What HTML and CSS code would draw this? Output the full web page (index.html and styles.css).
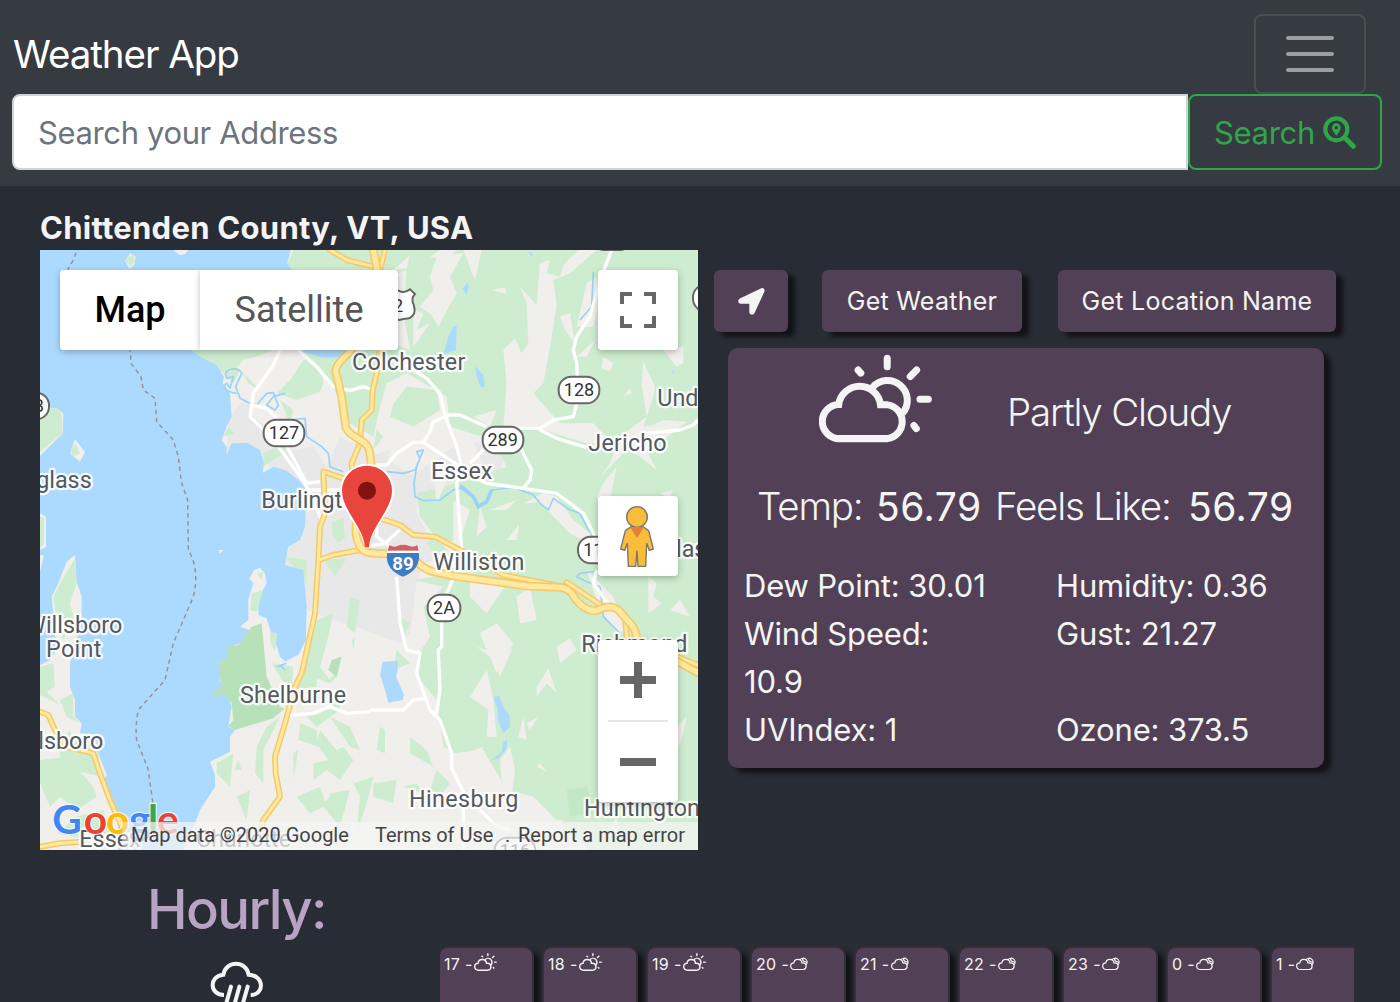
FILE: index.html
```html
<!DOCTYPE html>
<html lang="en">
<head>
<meta charset="utf-8">
<title>Weather App</title>
<link rel="stylesheet" href="styles.css">
</head>
<body>
<svg class="defs" aria-hidden="true">
  <symbol id="cloud" viewBox="357 313 338 264">
    <g fill="none" stroke="currentColor" stroke-width="21">
      <path d="M420 565H562A51 51 0 0 0 562 464H541A63 63 0 0 0 416 463A51 51 0 0 0 420 565Z"/>
      <path d="M517 412A55 55 0 1 1 607 489"/>
      <path stroke-linecap="round" d="M561 325V350M474 360L482 369M630 379L649 360M659 447H684M641 526L648 535"/>
    </g>
  </symbol>
  <symbol id="night" viewBox="357 378 278 204">
    <g fill="none" stroke="currentColor" stroke-width="19">
      <path d="M420 565H562A51 51 0 0 0 562 464H541A63 63 0 0 0 416 463A51 51 0 0 0 420 565Z"/>
      <path d="M514 413A57 57 0 1 1 607 489M550 394Q548 445 616 450"/>
    </g>
  </symbol>
</svg>
<header class="navbar">
  <div class="nav-top">
    <a class="brand">Weather App</a>
    <button class="toggler"><i></i><i></i><i></i></button>
  </div>
  <form class="search">
    <input class="address" type="text" placeholder="Search your Address">
    <button class="search-btn" type="button"><span>Search</span>
      <svg width="33" height="33" viewBox="0 0 99 99"><g fill="none" stroke="currentColor"><circle cx="40" cy="40" r="33" stroke-width="12.500"/><path d="M67 67L91 91" stroke-width="15" stroke-linecap="round"/></g><path fill="currentColor" fill-rule="evenodd" d="M40 59C33 49 27 43 27 35A13 13 0 0 1 53 35C53 43 47 49 40 59ZM40 30A5 5 0 1 0 40 40A5 5 0 1 0 40 30Z"/></svg>
    </button>
  </form>
</header>
<main class="main">
  <section class="place">
    <h1 class="place-name">Chittenden County, VT, USA</h1>
    <div class="map">
      <svg class="terrain" viewBox="0 0 1974 1800">
        <defs>
          <path id="minor" d="M870 0L920 30L1000 50M1035 0L1020 60V300L1008 380L998 420L995 480L965 510L960 580L935 640L945 760M910 685L850 665L855 790L840 830L835 930L825 1090L785 1270L765 1310L735 1420L705 1520L707 1570L720 1640L670 1710L650 1800M835 930L880 915L960 900M1020 805L1080 825L1120 855L1185 860L1260 900L1390 975L1570 1010M1580 997L1690 1070M1755 1100L1760 1160M0 1385L25 1395L45 1440L80 1490L160 1510L180 1570L210 1650L250 1740M0 1790L60 1780L130 1775M1900 1215L1974 1245"/>
          <path id="highway" d="M1000 0L1012 60L1000 180L930 305Q885 345 887 365L905 440L917 530Q920 545 945 560L975 580Q990 590 993 640L950 750L948 850Q955 900 985 908L1040 912L1130 935Q1155 960 1180 965L1240 978L1460 1008L1560 1012Q1590 1015 1605 1045Q1635 1085 1670 1082Q1715 1058 1740 1085L1775 1125Q1790 1145 1792 1175L1850 1200L1974 1268"/>
        </defs>
        <rect width="1974" height="1800" fill="#f0efeb"/>
        <path fill="#e8e8e8" d="M570 500L620 440L640 500L760 600L820 590L860 650L900 560L990 600L1130 680L1130 790L1180 880L1250 910L1150 940L1130 1000L1110 1150L1080 1180L950 1130L880 1110L800 1080L735 940L800 720L670 640L560 600ZM1130 670L1240 590L1290 570L1395 610L1370 700L1300 760L1130 740ZM990 620L1050 600L1040 660ZM1790 545L1830 520L1880 535L1850 560L1795 565Z"/>
        <path fill="#ceedd0" d="M742 40L760 0H1974V1800H1650L1580 1740L1480 1640L1400 1620L1330 1500L1240 1510L1210 1490L1190 1350L1140 1290L1130 1220L1170 1160L1150 1070L1210 1010L1120 990L1300 960L1250 870L1200 880L1140 800L1130 730L1250 700L1400 650L1360 570L1230 530L1220 440L1100 370L1040 400L1020 470L1000 560L930 520L880 410L770 300L870 320L760 70Z"/>
        <path fill="#f0efeb" d="M1000 300L1060 280L1110 300L1090 190L1100 60L1000 100ZM1060 60L1110 15L1100 55ZM1170 80L1190 20L1270 10L1230 80L1250 130L1230 165L1195 230L1175 195L1140 170L1180 120ZM1170 20L1200 0H1250L1220 30ZM1270 0H1325L1305 90ZM1355 120L1395 112L1400 132ZM1440 110L1490 165L1500 40L1530 30L1520 70L1560 80L1570 45L1615 0H1670L1590 70L1540 90L1550 165L1530 290L1510 400L1480 430L1560 520L1660 520L1720 580L1640 580L1510 540L1390 530L1400 400L1390 300L1425 265L1445 310L1465 280L1460 160ZM1560 200L1590 190L1605 280L1575 240ZM1640 100L1700 60L1660 230L1610 230ZM1610 320L1665 270L1640 320ZM1690 320L1720 340L1710 365L1685 355ZM1810 335L1845 410L1840 440L1810 530L1840 525L1870 510L1940 515L1890 555L1820 600L1850 660L1800 620L1760 600L1680 680L1710 640L1740 560L1820 500L1805 400ZM1870 300L1930 290V340L1910 350ZM1750 440L1770 415L1775 430ZM1780 420L1760 445ZM1690 700L1730 650L1700 800L1670 740ZM1300 500L1370 480L1350 530ZM1120 180L1150 190L1130 240L1170 220L1120 290ZM1210 550L1300 570L1330 650L1280 650ZM1180 660L1240 650L1190 760ZM1350 780L1430 750L1400 780ZM1240 750L1290 780L1260 870L1240 910ZM1400 870L1440 820L1430 870ZM1450 760L1510 730L1550 740L1600 810L1650 850L1640 880L1590 850L1500 760ZM1860 730L1900 720L1890 740L1930 770ZM1320 770L1340 830L1310 860ZM1640 960L1720 1040L1760 1140L1730 1150L1680 1080ZM1825 980L1850 1000L1840 1040L1865 1060L1825 1090ZM1290 970L1400 1000L1340 1090L1290 1040ZM1430 1040L1470 1010L1490 1110L1440 1120ZM1310 1190L1340 1200L1320 1150L1370 1120L1420 1180L1370 1270L1350 1220ZM1550 1190L1590 1165L1610 1200L1560 1240ZM1490 1310L1525 1255L1550 1330L1520 1300L1490 1340ZM1370 1250L1420 1190L1380 1280ZM1290 1340L1340 1260L1360 1350L1370 1460L1340 1460L1345 1380ZM1435 1460L1450 1400L1460 1470ZM1460 1420L1495 1400L1470 1440ZM1380 1530L1410 1490L1425 1560L1415 1640L1385 1600ZM1250 1520L1330 1490L1290 1640L1240 1600ZM1500 1540L1520 1565L1490 1550ZM1890 1080L1920 1050L1950 1100ZM1910 1430L1940 1400L1930 1450L1910 1510ZM1700 1740L1730 1705L1740 1750ZM1490 1710L1570 1710L1540 1770Z"/>
        <path fill="#ceedd0" d="M1040 170L1060 140V220ZM610 330L590 350L660 420L625 400L600 360L580 400L540 360L480 325L440 300H700L650 320ZM750 390L790 330L840 320L850 400L840 425L770 450L710 430ZM720 450L760 480L750 520ZM670 610L750 575L730 610L670 650ZM550 560L565 530L585 550ZM875 815L910 805L915 865L895 880L878 855ZM735 920L800 930V1000L760 950ZM850 930L920 925L885 980ZM930 1040L960 1050L945 1150L920 1130ZM935 1170L945 1165L940 1200ZM830 1110L880 1090L860 1180L840 1250L870 1290L900 1235L890 1280L870 1300L820 1280L740 1240L790 1240ZM680 1140L715 1150L705 1210L690 1180ZM690 1230L750 1260L830 1250L830 1310L760 1320L720 1290ZM800 1400L840 1390L900 1340L900 1380L830 1430ZM870 1400L930 1430L960 1500L930 1490ZM780 1420L830 1440L835 1490L775 1470ZM720 1400L680 1430L650 1490L645 1570L670 1600L670 1500ZM760 1510L775 1500L760 1590ZM840 1440L890 1500L910 1490L940 1530L900 1590L860 1560L820 1590L820 1540L865 1530L830 1480ZM530 1540L580 1510L570 1610L530 1570ZM595 1530L605 1560H585ZM590 1640L630 1620L620 1710ZM770 1640L840 1610L860 1670L870 1630L930 1620L900 1730L850 1670L810 1690ZM940 1600L1000 1580L980 1660L950 1750L960 1640ZM1070 1200L1110 1240L1060 1260ZM1080 1100L1110 1120L1090 1160ZM1020 1430L1035 1440V1510L1010 1500ZM1110 1460L1160 1500L1180 1550L1110 1510ZM1000 1600L1070 1590L1060 1660L1000 1640ZM1190 1560L1230 1600L1200 1640L1170 1620ZM1090 1610L1130 1600L1150 1630ZM1070 930L1100 940L1080 970ZM1160 880L1190 850L1220 900L1180 910ZM1060 460L1100 410L1190 420L1200 480L1120 530L1050 500ZM1010 540L1030 560L1000 600ZM1420 800L1500 750L1450 850ZM850 1660L880 1630L890 1700Z"/>
        <path fill="#acdaff" d="M0 0H752L742 40L760 65L900 220L935 305Q900 330 840 320L775 300H450L490 325L530 345L552 380L548 400L570 430L575 500L560 530L545 570L560 590L560 615L575 580L620 578L660 600L672 640L668 668L700 650L740 662L775 690L800 720L795 830L780 870L745 890L735 945L790 960L800 1070L798 1170L775 1215L735 1235L720 1220L700 1155L635 1130L600 1180L565 1195V1225L535 1235L545 1280L540 1290L560 1330L575 1370L565 1430L585 1440L570 1460V1505L510 1535L525 1575V1610L480 1680L465 1720L430 1800H0Z"/>
        <path fill="#f0efeb" d="M0 1245L30 1230L50 1200L35 1040L55 1000L80 935L105 915L110 995L125 1040V1110L90 1240L90 1310L105 1350V1400L125 1420L120 1450L165 1455L175 1510L200 1575L185 1600L205 1660L235 1710V1800H0ZM0 470L50 475L70 490L68 550L0 618ZM0 790L18 800V890L0 900V965L12 915H0ZM105 568L135 605L120 635L90 610ZM270 10L287 20L283 45L268 57L255 32ZM400 0H445L435 12L420 16ZM535 900H550L540 912ZM625 1110V1048L640 1000L628 985L643 960L660 953L674 968L680 1000L655 1045V1095L680 1105L700 1170L725 1240L775 1215L800 1200L760 1330L720 1390L690 1340L660 1150L600 1130Z"/>
        <path fill="#ceedd0" d="M0 475H50L66 490V550L0 605ZM0 800H12V880L0 895ZM105 580L120 610L100 620L92 605ZM262 20L280 16L285 35L270 50L258 35ZM105 925L110 1000L90 1060L100 1100L70 1170L50 1110L40 1040L60 1000ZM650 970L670 965L665 990ZM635 1030L670 1020L650 1085L630 1080ZM0 1250L40 1240L45 1310L20 1325L60 1365L0 1335ZM60 1350L100 1330V1400L120 1420L80 1400ZM60 1470L90 1440L100 1480L150 1450L170 1480L185 1580L140 1570L60 1550ZM0 1530L80 1520L160 1610L170 1640L110 1680L60 1640L30 1670L0 1600ZM50 1750L110 1700L190 1680L215 1760L150 1770ZM690 1145L712 1150L705 1205L692 1180ZM695 1240L760 1250L755 1310L725 1290Z"/>
        <path fill="#b7e2b9" d="M635 1130L665 1120L680 1280L720 1370L735 1375L700 1405L585 1440L565 1428L580 1410L575 1360L550 1330L530 1340L518 1325L545 1310L535 1235L562 1225L565 1190L595 1185ZM875 1230L905 1220L890 1280L865 1260Z"/>
        <path fill="#c3e8c5" d="M1580 1620L1640 1610L1670 1690L1590 1700Z"/>
        <path fill="#acdaff" d="M1225 260L1240 228H1250L1248 300L1210 312ZM1268 115L1282 98L1288 110L1278 135ZM1305 348L1330 375L1334 410L1322 412L1310 380ZM1028 1235L1074 1233L1073 1260L1068 1280L1092 1335L1088 1350L1045 1358L1032 1310L1020 1275ZM1360 1340L1378 1338L1390 1370L1408 1395L1410 1430L1390 1450L1375 1415L1372 1375ZM1390 1475L1402 1470L1398 1500L1375 1525L1352 1532L1385 1505ZM1463 5L1478 10V20ZM1893 357L1905 365L1900 372Z"/>
        <path fill="none" stroke="#9bd2f8" stroke-width="5" stroke-linejoin="round" d="M590 430C555 425 545 410 560 400L570 415L580 380L560 385C545 350 600 350 605 370L587 410L600 445L620 455L650 465L680 430L700 428L715 465L705 480L680 465L700 440L735 430M750 510L795 505L800 560L845 590L865 610L870 650L910 665M1040 665L1090 670L1125 660L1140 625L1130 605L1150 600L1130 650L1122 700L1125 740L1150 752L1200 750L1240 720L1270 710L1300 740L1315 770L1340 755L1355 720L1420 712L1480 735L1500 760L1525 780L1540 745L1590 780L1620 790L1645 840L1680 880M1690 960L1620 970L1610 980L1640 995L1680 1010L1690 1100L1740 1150M710 1250L740 1240M720 1245L735 1260M1660 65L1655 170L1620 210"/>
        <path fill="none" stroke="#9bd2f8" stroke-width="11" d="M1260 708L1300 740L1315 770L1340 755L1355 720"/>
        <path fill="none" stroke="#fff" stroke-width="10" stroke-linejoin="round" d="M720 300L700 345L640 430L635 465L680 475L715 510M635 465L630 500L690 560L730 610L795 700L850 820M742 590L800 700L840 695M775 300L830 350L880 410L930 422L970 410L1000 420M1095 345L1160 385L1200 430L1215 495L1250 590L1265 650L1250 700L1265 900M1240 985L1220 1030M1205 1110V1190L1195 1200L1200 1320L1190 1390M1215 495H1260L1340 530M1215 500L1180 515L1170 545L1150 577H1120L1070 610L1040 645H1000M1150 577L1260 650M1290 640L1330 600M1440 590L1475 660L1470 690L1450 715L1340 700L1280 670M1450 715L1550 730L1630 790L1670 870M1670 960L1660 1000L1710 1070M1430 535L1500 535L1540 510L1600 500L1615 440L1610 340L1600 300L1610 260L1650 200L1680 90L1715 0M1500 540L1550 565L1640 592M1820 550L1920 540L1960 525L1974 510M1070 980L1080 1120L1100 1200L1140 1210L1130 1270L1170 1380L1200 1410L1235 1510V1555L1270 1625V1800M990 1380H1090L1120 1350L1155 1345M1320 1680L1370 1730L1410 1740M750 1395L820 1390L870 1370L920 1390L990 1385M1010 830V860L1035 880L1080 840M800 720L910 720M960 892L1040 880L1070 920"/>
        <g fill="none" stroke-linejoin="round" stroke-linecap="round">
          <use href="#minor" stroke="#f4ca67" stroke-width="18"/>
          <use href="#minor" stroke="#ffe8a0" stroke-width="9"/>
          <use href="#highway" stroke="#f4ca67" stroke-width="26"/>
          <use href="#highway" stroke="#ffe8a0" stroke-width="16"/>
        </g>
        <path fill="none" stroke="#959595" stroke-width="4.500" stroke-dasharray="13 11" d="M108 8L100 30L85 55L70 120L270 290L273 340L303 380L310 420L345 445L350 515L400 570L415 620L425 700L443 750L445 900Q480 960 460 1040L400 1180L375 1290L295 1380Q285 1430 290 1470L325 1560L340 1670"/>
        <g class="labels" font-size="70">
          <text x="936" y="359" textLength="340">Colchester</text><text x="1173" y="686" textLength="184">Essex</text><text x="664" y="775" textLength="322">Burlington</text><text x="1645" y="604" textLength="235">Jericho</text><text x="1852" y="469">Underhill</text><text x="155" y="715" text-anchor="end">Douglass</text><text x="247" y="1150" text-anchor="end">Willsboro</text><text x="18" y="1222" textLength="166">Point</text><text x="190" y="1498" text-anchor="end">Willsboro</text><text x="600" y="1360" textLength="318">Shelburne</text><text x="1107" y="1672" textLength="328">Hinesburg</text><text x="1632" y="1697" textLength="348">Huntington</text><text x="1180" y="961" textLength="273">Williston</text><text x="1624" y="1206" textLength="318">Richmond</text><text x="1908" y="921">las</text><text x="118" y="1790">Essex</text><text x="468" y="1792" textLength="285">Charlotte</text>
        </g>
        <g class="shields">
          <rect x="671" y="509" width="122" height="80" rx="38"/><text x="732" y="568">127</text>
          <rect x="1556" y="380" width="122" height="80" rx="38"/><text x="1617" y="439">128</text>
          <rect x="1328" y="530" width="122" height="80" rx="38"/><text x="1388" y="589">289</text>
          <rect x="1163" y="1034" width="98" height="80" rx="38"/><text x="1212" y="1093">2A</text>
          <rect x="1614" y="860" width="122" height="80" rx="38"/><text x="1675" y="919">117</text>
          <rect x="-95" y="428" width="122" height="80" rx="38"/><text x="-34" y="487">228</text>
          <rect x="1364" y="1763" width="122" height="80" rx="38"/><text x="1425" y="1822">116</text>
          <rect x="1959" y="104" width="122" height="80" rx="38"/>
          <rect x="1655" y="-80" width="122" height="80" rx="38"/>
          <path d="M1032 130L1045 118Q1060 130 1076 122Q1094 132 1110 118L1125 132Q1112 145 1121 164C1130 193 1115 207 1094 206L1078 210L1060 206C1035 207 1025 190 1035 164Q1042 145 1032 130Z"/><text x="1074" y="186">2</text>
        </g>
        <path fill="#d26062" d="M1048 885Q1060 892 1070 889Q1080 883 1089 885Q1099 883 1110 889Q1122 892 1132 885L1136 905H1042Z"/><path fill="#fff" d="M1041 902H1137V911H1041Z"/><path fill="#3e7bc4" d="M1041 909H1137C1141 947 1120 968 1089 980C1055 967 1037 945 1041 909Z"/><text class="interstate" x="1089" y="959">89</text>
        <path fill="#fff" d="M981 898C970 838 900 790 900 722A81 81 0 0 1 1062 722C1062 790 990 835 981 898Z"/><path fill="#e8453c" d="M975 892C973 835 906 780 906 722A75 75 0 0 1 1056 722C1056 780 988 835 987 892Z"/><circle cx="981" cy="722" r="27" fill="#80130f"/>
        <g class="logo"><text x="37" y="1752" fill="#4285f4">G</text><text x="131" y="1752" fill="#ea4335">o</text><text x="198" y="1752" fill="#fbbc05">o</text><text x="267" y="1752" fill="#4285f4">g</text><text x="324" y="1752" fill="#34a853">l</text><text x="351" y="1752" fill="#ea4335">e</text></g>
      </svg>
      <div class="map-types"><span class="map-type active">Map</span><span class="map-type">Satellite</span></div>
      <div class="control fullscreen"><svg width="36" height="36" fill="none" stroke="#666" stroke-width="4"><path d="M2 12V2H12M24 2H34V12M34 24V34H24M12 34H2V24"/></svg></div>
      <div class="control pegman"><svg width="36" height="62" viewBox="0 0 108 186"><g fill="#fbbc3c" stroke="#77756c" stroke-width="4"><path d="M32 66H70L86 77L100 132L88 136L80 115L77 184H54L51 137L47 184H25L22 115L14 136L2 132L16 77Z"/><circle cx="51" cy="36" r="31"/></g><path fill="#e18037" d="M30 66H72L51 99Z"/></svg></div>
      <div class="zoom"><svg width="36" height="36"><path fill="#666" d="M14 0H22V14H36V22H22V36H14V22H0V14H14Z"/></svg><hr><svg width="36" height="36"><path fill="#666" d="M0 14H36V22H0Z"/></svg></div>
      <div class="attribution"><span class="copyright">Map data ©2020 Google</span><span class="terms">Terms of Use</span><span class="dot">.</span><span class="report">Report a map error</span></div>
    </div>
  </section>
  <section class="weather">
    <div class="actions">
      <button class="action locate"><svg width="27" height="27" viewBox="0 0 81 81"><path fill="currentColor" d="M70 1L7 31C-3 36 0 47 8 47H34V72C34 81 47 83 50 74L79 11C82 4 76-2 70 1Z"/></svg></button>
      <button class="action get-weather">Get Weather</button>
      <button class="action get-name">Get Location Name</button>
    </div>
    <article class="card">
      <div class="summary"><svg class="summary-icon"><use href="#cloud"/></svg><span class="condition">Partly Cloudy</span></div>
      <div class="temps"><span class="t-label">Temp:</span><span class="t-value">56.79</span><span class="t-label feels">Feels Like:</span><span class="t-value">56.79</span></div>
      <div class="details"><span>Dew Point: 30.01</span><span>Humidity: 0.36</span><span>Wind Speed:<br>10.9</span><span>Gust: 21.27</span><span>UVIndex: 1</span><span>Ozone: 373.5</span></div>
    </article>
  </section>
</main>
<section class="hourly">
  <div class="hourly-head"><h2 class="hourly-title">Hourly:</h2>
    <svg class="rain" width="54" height="60" viewBox="0 0 162 180"><g fill="none" stroke="currentColor" stroke-width="12"><path d="M42 102C-2 102-4 45 40 41C48-3 108-3 116 41C164 43 164 102 122 102"/><path stroke-linecap="round" d="M63 77L45 140M88 77L68 150M113 77L95 140"/></g></svg>
  </div>
  <div class="hours">
    <div class="hour">17 -<svg class="day"><use href="#cloud"/></svg></div><div class="hour">18 -<svg class="day"><use href="#cloud"/></svg></div><div class="hour">19 -<svg class="day"><use href="#cloud"/></svg></div><div class="hour">20 -<svg class="moon"><use href="#night"/></svg></div><div class="hour">21 -<svg class="moon"><use href="#night"/></svg></div><div class="hour">22 -<svg class="moon"><use href="#night"/></svg></div><div class="hour">23 -<svg class="moon"><use href="#night"/></svg></div><div class="hour">0 -<svg class="moon"><use href="#night"/></svg></div><div class="hour">1 -<svg class="moon"><use href="#night"/></svg></div>
  </div>
</section>
</body>
</html>
```
FILE: styles.css
```css
* { box-sizing: border-box; }
body { margin: 0; height: 1002px; overflow: hidden; background: #282c34; color: #f4f4f4; font-family: Inter, sans-serif; }
button, input { font-family: inherit; margin: 0; }
svg { display: block; flex: none; }
.defs { display: none; }
.navbar { height: 186px; padding: 14px 18px 0 12px; background: #363a41; }
.nav-top { display: flex; justify-content: space-between; height: 80px; padding-right: 16px; }
.brand { padding-left: 1px; font-size: 38.5px; line-height: 81px; color: #fff; letter-spacing: -1.05px; white-space: nowrap; }
.toggler { display: flex; flex-direction: column; align-items: center; justify-content: center; gap: 12px; width: 112px; height: 80px; padding: 0; border: 2px solid #4a4d52; border-radius: 8px; background: none; }
.toggler i { width: 48px; height: 4px; border-radius: 2px; background: #9b9da0; }
.search { display: flex; }
.address { width: 1176px; height: 76px; padding: 1px 24px 0; border: 2px solid #ced4da; border-radius: 8px 0 0 8px; font-size: 31px; letter-spacing: -.37px; }
.address::placeholder { color: #6c757d; }
.search-btn { display: flex; align-items: center; justify-content: center; gap: 8px; width: 194px; height: 76px; padding: 0; border: 2px solid #30a64a; border-radius: 8px; background: none; color: #30a64a; font-size: 31px; letter-spacing: -.3px; }
.search-btn span { padding-top: 1px; }
.main { display: flex; height: 664px; padding-left: 40px; }
.place { width: 658px; }
.place-name { margin: 0; padding-top: 17px; height: 64px; font-size: 31px; line-height: 49px; font-weight: 700; letter-spacing: .27px; white-space: nowrap; }
.map { position: relative; width: 658px; height: 600px; overflow: hidden; font-family: Roboto, sans-serif; }
.terrain { width: 658px; height: 600px; }
.labels { fill: #55595f; stroke: #fff; stroke-opacity: .85; stroke-width: 14px; stroke-linejoin: round; paint-order: stroke; }
.shields { fill: #fff; stroke: #666; stroke-width: 6px; }
.shields text { fill: #333; stroke: none; font-size: 54px; text-anchor: middle; }
.interstate { fill: #fff; font-size: 56px; font-weight: 700; text-anchor: middle; }
.logo { font-family: Lato, sans-serif; font-size: 122px; font-weight: 700; stroke: #fff; stroke-width: 7px; stroke-opacity: .7; paint-order: stroke; }
.map-types { position: absolute; left: 20px; top: 20px; display: flex; height: 80px; border-radius: 4px; background: #fff; box-shadow: 0 2px 7px rgba(0,0,0,.27); overflow: hidden; }
.map-type { width: 198px; line-height: 80px; text-align: center; font-size: 36px; color: #565656; background: #fff; box-shadow: 0 0 6px rgba(0,0,0,.25); }
.map-type.active { width: 140px; font-weight: 500; color: #000; box-shadow: none; }
.control, .zoom { position: absolute; right: 20px; width: 80px; height: 80px; border-radius: 4px; background: #fff; box-shadow: 0 2px 7px rgba(0,0,0,.27); display: flex; align-items: center; justify-content: center; }
.fullscreen { top: 20px; }
.pegman { top: 246px; }
.zoom { top: 390px; height: 162px; flex-direction: column; gap: 22px; }
.zoom hr { width: 60px; height: 2px; margin: 0; border: 0; background: #e6e6e6; }
.attribution { position: absolute; right: 0; bottom: 0; display: flex; width: 576px; height: 28px; padding-left: 9px; line-height: 27px; font-size: 20px; color: #444; white-space: nowrap; background: linear-gradient(90deg, rgba(245,245,245,.3), rgba(245,245,245,.72) 8px); }
.copyright { width: 244px; }
.terms { width: 130px; }
.dot { width: 13px; }
.weather { padding: 84px 0 0 16px; }
.actions { display: flex; height: 62px; }
.action { height: 62px; padding: 0; border: 0; border-radius: 6px; background: #524156; color: #f4f4f4; font-size: 25px; letter-spacing: .25px; white-space: nowrap; box-shadow: 7px 5px 4px #121418; }
.locate { display: flex; align-items: center; justify-content: center; width: 74px; margin-right: 34px; }
.get-weather { width: 200px; margin-right: 36px; }
.get-name { width: 278px; }
.card { width: 596px; height: 420px; margin: 16px 0 0 14px; border-radius: 10px; background: #524156; box-shadow: 7px 5px 4px #121418; white-space: nowrap; }
.summary { display: flex; height: 126px; padding: 6px 0 0 91px; }
.summary-icon { width: 113px; height: 89px; }
.condition { margin-left: 75px; font-size: 38.5px; font-weight: 300; letter-spacing: -1.2px; line-height: 117px; }
.temps { display: flex; height: 87px; padding-left: 29px; line-height: 65px; font-size: 39px; letter-spacing: .5px; }
.t-label { width: 119px; font-size: 38.5px; font-weight: 300; letter-spacing: -1.2px; }
.t-value { width: 119px; }
.t-label.feels { width: 193px; }
.details { display: grid; grid-template-columns: 312px 1fr; padding: 1px 0 0 16px; font-size: 31px; line-height: 48px; letter-spacing: -.15px; }
.hourly { display: flex; height: 152px; }
.hourly-head { width: 440px; }
.hourly-title { margin: 0; padding: 26px 0 0 147px; font-size: 54.5px; line-height: 67px; font-weight: 500; letter-spacing: -1.6px; color: #b9a3c2; }
.rain { margin: 18px 0 0 210px; }
.hours { display: flex; gap: 12px; width: 914px; padding-top: 98px; overflow: hidden; }
.hour { display: flex; flex: none; width: 92px; height: 100px; padding: 6px 0 0 4px; border-radius: 8px; background: #524156; box-shadow: 0 0 0 2px #352e3a, 7px 5px 4px 1px #121418; font-size: 16px; line-height: 20px; letter-spacing: .35px; white-space: nowrap; }
.day { width: 23px; height: 18px; margin: -1px 0 0 1px; }
.moon { width: 18px; height: 14px; margin: 3px 0 0 1px; }
```
